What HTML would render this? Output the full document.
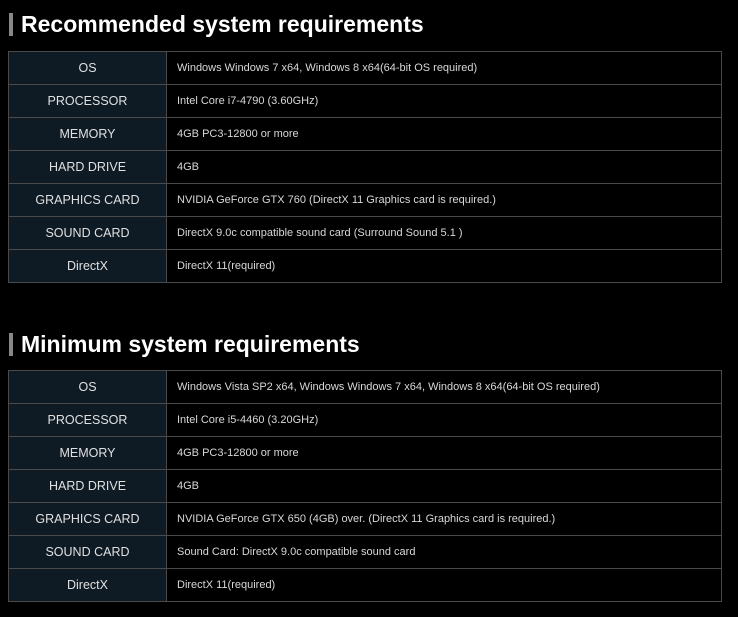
<!DOCTYPE html>
<html><head><style>
body{margin:0;background:#000;width:738px;height:617px;overflow:hidden;font-family:"Liberation Sans",sans-serif;}
h2{position:absolute;left:9px;margin:0;height:23px;border-left:4px solid #888;padding-left:8px;color:#fff;font-size:23px;font-weight:bold;line-height:23px;}
table{position:absolute;left:8px;width:714px;border-collapse:collapse;}
td{border:1px solid #4a4a4a;height:32px;padding:0;font-size:11px;color:#d8d8d8;}
td.l{width:157px;background:#0e1a24;text-align:center;font-size:12.5px;color:#e0e0e0;}
td.v{padding-left:10px;}
</style></head><body>
<h2 style="top:13px">Recommended system requirements</h2>
<table style="top:51px">
<tr><td class="l">OS</td><td class="v">Windows Windows 7 x64, Windows 8 x64(64-bit OS required)</td></tr>
<tr><td class="l">PROCESSOR</td><td class="v">Intel Core i7-4790 (3.60GHz)</td></tr>
<tr><td class="l">MEMORY</td><td class="v">4GB PC3-12800 or more</td></tr>
<tr><td class="l">HARD DRIVE</td><td class="v">4GB</td></tr>
<tr><td class="l">GRAPHICS CARD</td><td class="v">NVIDIA GeForce GTX 760 (DirectX 11 Graphics card is required.)</td></tr>
<tr><td class="l">SOUND CARD</td><td class="v">DirectX 9.0c compatible sound card (Surround Sound 5.1 )</td></tr>
<tr><td class="l">DirectX</td><td class="v">DirectX 11(required)</td></tr>
</table>
<h2 style="top:333px">Minimum system requirements</h2>
<table style="top:370px">
<tr><td class="l">OS</td><td class="v">Windows Vista SP2 x64, Windows Windows 7 x64, Windows 8 x64(64-bit OS required)</td></tr>
<tr><td class="l">PROCESSOR</td><td class="v">Intel Core i5-4460 (3.20GHz)</td></tr>
<tr><td class="l">MEMORY</td><td class="v">4GB PC3-12800 or more</td></tr>
<tr><td class="l">HARD DRIVE</td><td class="v">4GB</td></tr>
<tr><td class="l">GRAPHICS CARD</td><td class="v">NVIDIA GeForce GTX 650 (4GB) over. (DirectX 11 Graphics card is required.)</td></tr>
<tr><td class="l">SOUND CARD</td><td class="v">Sound Card: DirectX 9.0c compatible sound card</td></tr>
<tr><td class="l">DirectX</td><td class="v">DirectX 11(required)</td></tr>
</table>
</body></html>
